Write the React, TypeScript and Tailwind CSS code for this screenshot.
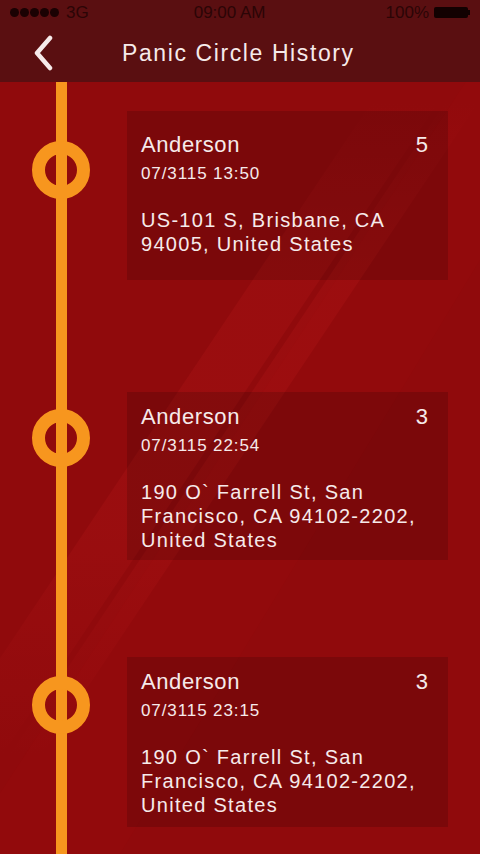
const items = [
  { pt: "pt-[29px]", circle: "mt-[59px]", cpt: "pt-[21px]", n: "5", date: "07/3115 13:50", addr: ["US-101 S, Brisbane, CA", "94005, United States"], h: "h-[169px]" },
  { pt: "pt-[112px]", circle: "mt-[129px]", cpt: "pt-[12px]", n: "3", date: "07/3115 22:54", addr: ["190 O` Farrell St, San", "Francisco, CA 94102-2202,", "United States"], h: "h-[168px]" },
  { pt: "pt-[97px]", circle: "mt-[116px]", cpt: "pt-[12px]", n: "3", date: "07/3115 23:15", addr: ["190 O` Farrell St, San", "Francisco, CA 94102-2202,", "United States"], h: "h-[170px]" },
];

export default function App() {
  return (
    <div className="relative w-[480px] h-[854px] overflow-hidden bg-[#900a0c] font-['Liberation_Sans',Arial,sans-serif] text-[#f6eaea] flex flex-col">
      {/* background streaks */}
      <svg className="absolute inset-0 pointer-events-none" width="480" height="854" viewBox="0 0 480 854">
        <defs>
          <linearGradient id="fade" x1="0" y1="1" x2="0" y2="0">
            <stop offset="0" stopColor="#ff3030" stopOpacity="0" />
            <stop offset="0.35" stopColor="#ff3030" stopOpacity="0.09" />
            <stop offset="0.75" stopColor="#ff3030" stopOpacity="0.09" />
            <stop offset="1" stopColor="#ff3030" stopOpacity="0" />
          </linearGradient>
        </defs>
        <polygon points="373,100 440,100 -1,760 -68,760" fill="url(#fade)" />
        <polygon points="447,100 480,100 39,760 6,760" fill="url(#fade)" />
        <polygon points="480,60 480,260 120,854 -40,854" fill="#ff2020" opacity="0.025" />
      </svg>

      {/* Status + header */}
      <div className="relative bg-[#5a0f11] h-[82px] shrink-0">
        <div className="relative flex items-center h-[24px] pl-[10px] pr-[10px] text-[17px] text-[#2b0506]">
          <div className="flex items-center gap-[1px]">
            <span className="w-[9px] h-[9px] rounded-full bg-[#1a0203]" />
            <span className="w-[9px] h-[9px] rounded-full bg-[#1a0203]" />
            <span className="w-[9px] h-[9px] rounded-full bg-[#1a0203]" />
            <span className="w-[9px] h-[9px] rounded-full bg-[#1a0203]" />
            <span className="w-[9px] h-[9px] rounded-full bg-[#1a0203]" />
            <span className="ml-[6px] leading-none">3G</span>
          </div>
          <span className="ml-[105px] leading-none">09:00 AM</span>
          <div className="ml-auto flex items-center gap-[5px]">
            <span className="leading-none">100%</span>
            <div className="flex items-center">
              <div className="w-[34px] h-[11px] bg-[#120101] rounded-[2px]" />
              <div className="w-[2px] h-[5px] bg-[#120101]" />
            </div>
          </div>
        </div>
        <div className="relative flex items-center h-[58px]">
          <svg className="ml-[32px]" width="22" height="36" viewBox="0 0 22 36">
            <path d="M18 3 L5 18 L18 33" fill="none" stroke="#f6eaea" strokeWidth="4.5" strokeLinecap="round" strokeLinejoin="round" />
          </svg>
          <h1 className="ml-[68px] text-[23px] leading-none tracking-[1.6px]">Panic Circle History</h1>
        </div>
      </div>

      {/* Timeline list */}
      <div className="relative flex-1 flex flex-col">
        {items.map((it, i) => (
          <div key={i} className={`flex ${i === items.length - 1 ? "flex-1" : ""}`}>
            <div className="relative w-[127px] shrink-0 flex flex-col items-center">
              <div className="absolute inset-y-0 left-[56px] w-[11px] bg-[#f7961e]" />
              <div className={`relative ${it.circle} ml-[-5px] w-[58px] h-[58px] rounded-full border-[13px] border-[#f7961e]`} />
            </div>
            <div className={it.pt}>
              <div className={`w-[321px] ${it.h} bg-black/[0.14] pl-[14px] pr-[20px] ${it.cpt}`}>
                <div className="flex justify-between text-[22px] leading-[26px]">
                  <span className="tracking-[0.6px]">Anderson</span>
                  <span>{it.n}</span>
                </div>
                <div className="mt-[5px] text-[17px] leading-[22px] tracking-[0.9px]">{it.date}</div>
                <div className="mt-[23px] text-[20px] leading-[24px] tracking-[1.3px]">
                  {it.addr.map((l, j) => (
                    <div key={j}>{l}</div>
                  ))}
                </div>
              </div>
            </div>
          </div>
        ))}
      </div>
    </div>
  );
}
